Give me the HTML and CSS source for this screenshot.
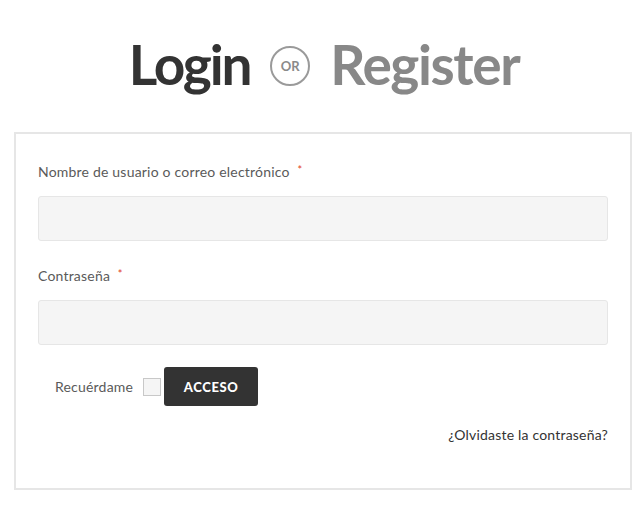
FILE: index.html
```html
<!DOCTYPE html>
<html lang="es">
<head>
<meta charset="utf-8">
<title>Login</title>
<link rel="stylesheet" href="styles.css">
</head>
<body>
<div class="page">
  <h2 class="switch">
    <span class="tab active">Login</span>
    <span class="or">OR</span>
    <span class="tab">Register</span>
  </h2>
  <form class="box">
    <div class="field">
      <label class="label">Nombre de usuario o correo electrónico <span class="req">*</span></label>
      <div class="input"></div>
    </div>
    <div class="field">
      <label class="label">Contraseña <span class="req">*</span></label>
      <div class="input"></div>
    </div>
    <div class="actions">
      <span class="remember">Recuérdame</span>
      <span class="check"></span>
      <span class="btn">ACCESO</span>
    </div>
    <div class="lost"><a href="#">¿Olvidaste la contraseña?</a></div>
  </form>
</div>
</body>
</html>
```
FILE: styles.css
```css
html, body {
  margin: 0;
  padding: 0;
  background: #fff;
}
body {
  font-family: "Lato", "Open Sans", sans-serif;
  color: #555;
}
.page {
  padding: 0 9px 0 14px;
}
.switch {
  margin: 0;
  height: 132px;
  display: flex;
  align-items: center;
  justify-content: center;
  gap: 20px;
  box-sizing: border-box;
  padding-bottom: 4px;
  padding-left: 2px;
}
.tab {
  font-family: "Lato", sans-serif;
  font-weight: 700;
  font-size: 55px;
  letter-spacing: -2.2px;
  color: #333;
  line-height: 1;
}
.tab:last-child {
  color: #888;
  letter-spacing: -1.4px;
}
.or {
  width: 36px;
  height: 36px;
  border: 2px solid #9a9a9a;
  border-radius: 50%;
  display: flex;
  align-items: center;
  justify-content: center;
  font-size: 13px;
  font-weight: 700;
  color: #8a8a8a;
  margin-top: 4px;
}
.box {
  display: block;
  border: 2px solid #e6e6e6;
  padding: 24px 22px 45px;
  margin: 0;
}
.label {
  display: block;
  font-size: 14px;
  letter-spacing: 0.2px;
  line-height: 28px;
  color: #5a5a5a;
  margin-bottom: 10px;
}
.req {
  color: #e2401c;
  font-size: 11px;
  vertical-align: top;
  margin-left: 4px;
  position: relative;
  top: 2px;
  line-height: 20px;
}
.input {
  height: 43px;
  background: #f5f5f5;
  border: 1px solid #e6e6e6;
  border-radius: 3px;
}
.field + .field {
  margin-top: 21px;
}
.actions {
  display: flex;
  align-items: center;
  margin-top: 22px;
  padding-left: 17px;
}
.remember {
  font-size: 14px;
  letter-spacing: 0.2px;
  color: #5a5a5a;
  margin-right: 10px;
}
.check {
  width: 16px;
  height: 16px;
  border: 1px solid #c8c8c8;
  background: #f5f5f5;
  margin-right: 3px;
}
.btn {
  width: 94px;
  height: 39px;
  background: #333;
  color: #fff;
  border-radius: 3px;
  display: flex;
  align-items: center;
  justify-content: center;
  font-weight: 900;
  font-size: 13px;
  letter-spacing: 0.6px;
}
.lost {
  text-align: right;
  margin-top: 20px;
  font-size: 14px;
  letter-spacing: 0.2px;
}
.lost a {
  color: #333;
  text-decoration: none;
}
```
